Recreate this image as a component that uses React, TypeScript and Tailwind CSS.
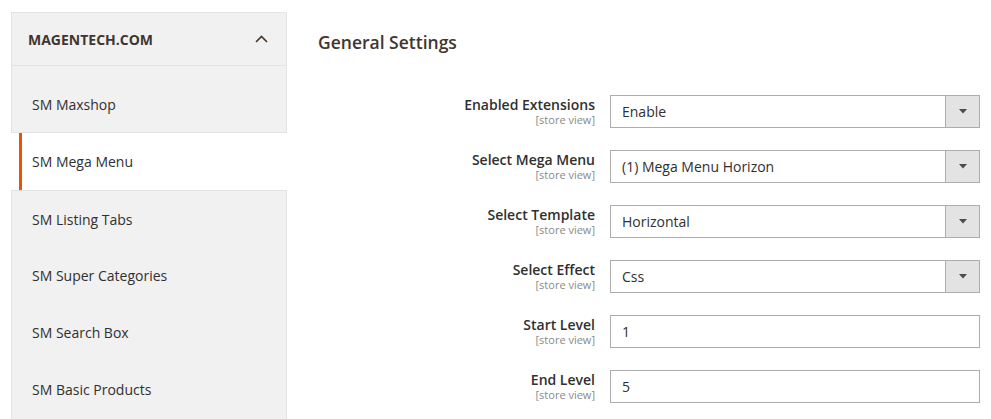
const navItems = [
  { label: 'SM Maxshop', active: false },
  { label: 'SM Mega Menu', active: true },
  { label: 'SM Listing Tabs', active: false },
  { label: 'SM Super Categories', active: false },
  { label: 'SM Search Box', active: false },
  { label: 'SM Basic Products', active: false },
];

type Field = {
  label: string;
  value: string;
  select: boolean;
};

const fields: Field[] = [
  { label: 'Enabled Extensions', value: 'Enable', select: true },
  { label: 'Select Mega Menu', value: '(1) Mega Menu Horizon', select: true },
  { label: 'Select Template', value: 'Horizontal', select: true },
  { label: 'Select Effect', value: 'Css', select: true },
  { label: 'Start Level', value: '1', select: false },
  { label: 'End Level', value: '5', select: false },
];

function Sidebar() {
  return (
    <aside className="flex w-[276px] shrink-0 flex-col">
      {/* Store title */}
      <div className="flex h-[54px] items-center justify-between border border-[#e3e3e3] bg-[#f1f1f1] pl-[16px] pr-[18px]">
        <strong className="text-[14px] font-bold uppercase text-[#41362f]">magentech.com</strong>
        <svg width="13" height="8" viewBox="0 0 13 8" fill="none">
          <path d="M1 7L6.5 1.5L12 7" stroke="#41362f" strokeWidth="1.6" />
        </svg>
      </div>

      <div className="h-[10px] border-x border-[#e3e3e3] bg-[#f1f1f1]" />

      {navItems.map((item, i) => {
        if (item.active) {
          return (
            <div
              key={item.label}
              className="relative z-10 -mr-[2px] ml-[8px] flex h-[57px] items-center border-l-[3px] border-[#eb5202] bg-white pl-[10px] text-[14px] text-[#303030]"
            >
              {item.label}
            </div>
          );
        }
        const beforeActive = navItems[i + 1]?.active;
        const afterActive = navItems[i - 1]?.active;
        return (
          <div
            key={item.label}
            className={`flex items-center border-x border-[#e3e3e3] bg-[#f1f1f1] pl-[20px] text-[14px] text-[#303030] ${
              beforeActive ? 'h-[57px] border-b' : afterActive ? 'h-[57px] border-t' : 'h-[57px]'
            }`}
          >
            {item.label}
          </div>
        );
      })}

      <div className="flex-1 border-x border-[#e3e3e3] bg-[#f1f1f1]" />
    </aside>
  );
}

function FieldRow({ field }: { field: Field }) {
  return (
    <div className="flex items-start">
      <div className="w-[292px] shrink-0 pr-[15px] text-right">
        <div className="text-[14px] font-semibold leading-[19px] text-[#303030]">{field.label}</div>
        <div className="text-[11px] leading-[12px] text-[#8a8a8a]">[store view]</div>
      </div>
      <div className="flex h-[33px] w-[370px] border border-[#adadad] bg-white">
        <div className="flex flex-1 items-center pl-[11px] text-[14px] text-[#303030]">{field.value}</div>
        {field.select && (
          <div className="flex w-[34px] items-center justify-center border-l border-[#adadad] bg-[#e3e3e3]">
            <svg width="8" height="5" viewBox="0 0 8 5">
              <path d="M0 0H8L4 4.5Z" fill="#514943" />
            </svg>
          </div>
        )}
      </div>
    </div>
  );
}

export default function App() {
  return (
    <div
      className="flex min-h-screen bg-white pl-[11px] pt-[12px]"
      style={{ fontFamily: '"Open Sans", "Noto Sans", sans-serif' }}
    >
      <Sidebar />
      <main className="flex-1 pl-[31px]">
        <h2 className="mt-[17px] text-[17.5px] font-semibold leading-[26px] text-[#41362f]">General Settings</h2>
        <div className="mt-[40px] flex flex-col gap-[22px]">
          {fields.map((f) => (
            <FieldRow key={f.label} field={f} />
          ))}
        </div>
      </main>
    </div>
  );
}
